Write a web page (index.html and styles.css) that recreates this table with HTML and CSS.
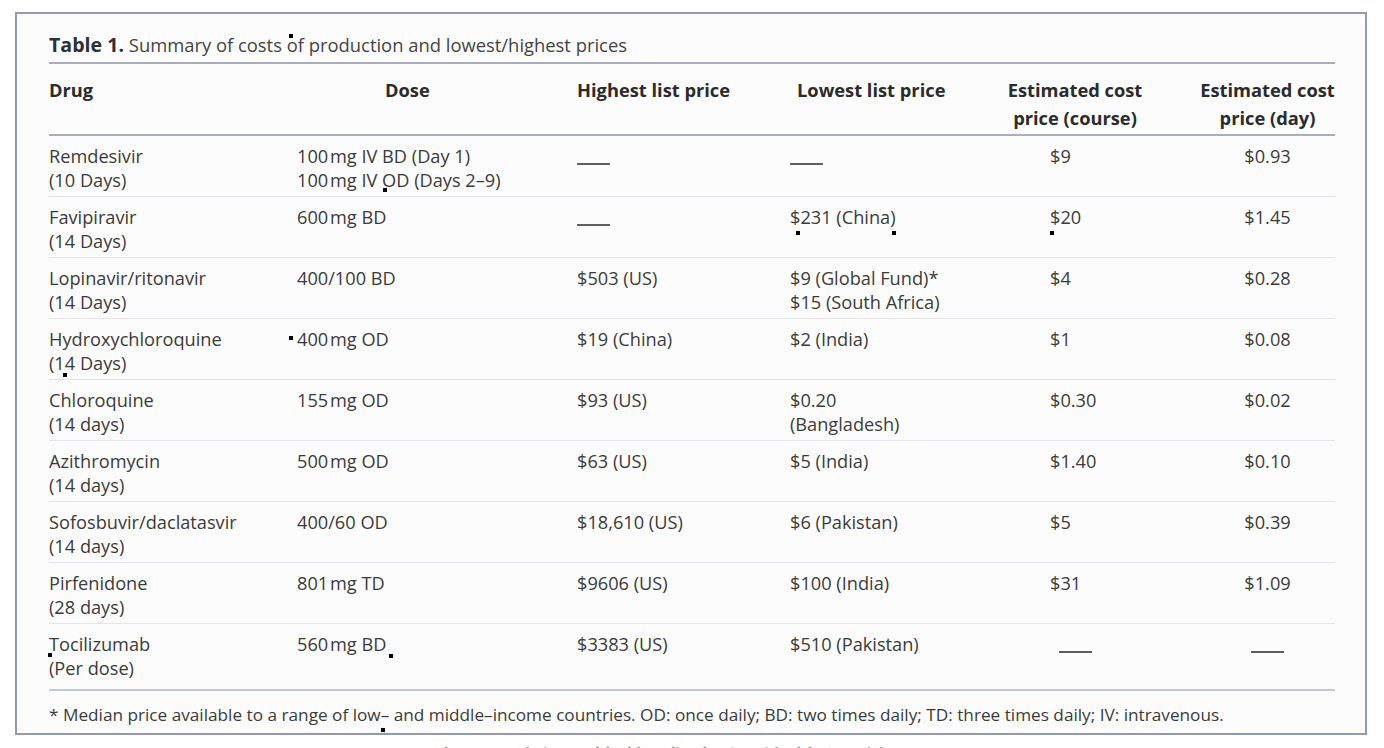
FILE: index.html
```html
<!DOCTYPE html>
<html lang="en">
<head>
<meta charset="utf-8">
<title>Table 1</title>
<link rel="stylesheet" href="styles.css">
</head>
<body>
<div class="page">
  <div class="frame">
    <div class="title"><b>Table 1.</b> Summary of costs of production and lowest/highest prices</div>
    <div class="table">
      <div class="row head">
        <div class="c1">Drug</div>
        <div class="c2">Dose</div>
        <div class="c3">Highest list price</div>
        <div class="c4">Lowest list price</div>
        <div class="c5">Estimated cost<br>price (course)</div>
        <div class="c6">Estimated cost<br>price (day)</div>
      </div>
      <div class="row">
        <div class="c1">Remdesivir<br>(10 Days)</div>
        <div class="c2">100&#8202;mg IV BD (Day 1)<br>100&#8202;mg IV OD (Days 2–9)</div>
        <div class="c3"><span class="dash"></span></div>
        <div class="c4"><span class="dash"></span></div>
        <div class="c5">$9</div>
        <div class="c6">$0.93</div>
      </div>
      <div class="row">
        <div class="c1">Favipiravir<br>(14 Days)</div>
        <div class="c2">600&#8202;mg BD</div>
        <div class="c3"><span class="dash"></span></div>
        <div class="c4">$231 (China)</div>
        <div class="c5">$20</div>
        <div class="c6">$1.45</div>
      </div>
      <div class="row">
        <div class="c1">Lopinavir/ritonavir<br>(14 Days)</div>
        <div class="c2">400/100 BD</div>
        <div class="c3">$503 (US)</div>
        <div class="c4">$9 (Global Fund)*<br>$15 (South Africa)</div>
        <div class="c5">$4</div>
        <div class="c6">$0.28</div>
      </div>
      <div class="row">
        <div class="c1">Hydroxychloroquine<br>(14 Days)</div>
        <div class="c2">400&#8202;mg OD</div>
        <div class="c3">$19 (China)</div>
        <div class="c4">$2 (India)</div>
        <div class="c5">$1</div>
        <div class="c6">$0.08</div>
      </div>
      <div class="row">
        <div class="c1">Chloroquine<br>(14 days)</div>
        <div class="c2">155&#8202;mg OD</div>
        <div class="c3">$93 (US)</div>
        <div class="c4">$0.20<br>(Bangladesh)</div>
        <div class="c5">$0.30</div>
        <div class="c6">$0.02</div>
      </div>
      <div class="row">
        <div class="c1">Azithromycin<br>(14 days)</div>
        <div class="c2">500&#8202;mg OD</div>
        <div class="c3">$63 (US)</div>
        <div class="c4">$5 (India)</div>
        <div class="c5">$1.40</div>
        <div class="c6">$0.10</div>
      </div>
      <div class="row">
        <div class="c1">Sofosbuvir/daclatasvir<br>(14 days)</div>
        <div class="c2">400/60 OD</div>
        <div class="c3">$18,610 (US)</div>
        <div class="c4">$6 (Pakistan)</div>
        <div class="c5">$5</div>
        <div class="c6">$0.39</div>
      </div>
      <div class="row">
        <div class="c1">Pirfenidone<br>(28 days)</div>
        <div class="c2">801&#8202;mg TD</div>
        <div class="c3">$9606 (US)</div>
        <div class="c4">$100 (India)</div>
        <div class="c5">$31</div>
        <div class="c6">$1.09</div>
      </div>
      <div class="row last">
        <div class="c1">Tocilizumab<br>(Per dose)</div>
        <div class="c2">560&#8202;mg BD</div>
        <div class="c3">$3383 (US)</div>
        <div class="c4">$510 (Pakistan)</div>
        <div class="c5 mid"><span class="dash"></span></div>
        <div class="c6"><span class="dash"></span></div>
      </div>
    </div>
    <div class="foot">* Median price available to a range of low– and middle–income countries. OD: once daily; BD: two times daily; TD: three times daily; IV: intravenous.</div>

    <span class="mark m1"></span>
    <span class="mark m2"></span>
    <span class="mark m3"></span>
    <span class="mark m4"></span>
    <span class="mark m5"></span>
    <span class="mark m6"></span>
    <span class="mark m7"></span>
    <span class="mark m8"></span>
    <span class="mark m9"></span>
    <span class="mark m10"></span>
  </div>
  <div class="caption">图表1：新冠药物成本与价格汇总</div>
</div>
</body>
</html>
```

FILE: styles.css
```css
* { box-sizing: border-box; }

html, body {
  margin: 0;
  padding: 0;
  background: #ffffff;
  overflow: hidden;
}

.page {
  width: 1384px;
  height: 748px;
  padding: 12px 0 0 15px;
  font-family: "Open Sans", "Noto Sans", sans-serif;
  color: #3b3b3b;
  overflow: hidden;
}

.frame {
  position: relative;
  width: 1352px;
  height: 723px;
  border: 2px solid #9599ad;
  background: #fcfcfc;
  padding: 19px 30px 0 32px;
}

.title {
  font-size: 18.4px;
  line-height: 24px;
  color: #444;
  padding-bottom: 5px;
  border-bottom: 2px solid #a9adbf;
  white-space: nowrap;
}

.title b {
  color: #2c3038;
  font-weight: 700;
  font-size: 19.6px;
}

.row {
  display: grid;
  grid-template-columns: 248px 280px 213px 210px 200px 135px;
  font-size: 18.2px;
  line-height: 24px;
  padding: 8px 0 4px;
  border-bottom: 1px solid #e4e4ea;
}

.row > div { white-space: nowrap; }

.row.head {
  font-size: 18.3px;
  font-weight: 700;
  color: #2b2b2b;
  line-height: 28px;
  padding: 12px 0 2px;
  border-bottom: 2px solid #a9adbf;
}

.row.last {
  padding-bottom: 9px;
  border-bottom: 2px solid #c3c6d4;
}

.head .c2 { padding-left: 88px; }
.head .c4 { padding-left: 7px; }
.head .c5 { text-align: center; padding-left: 0; padding-right: 50px; }
.head .c6 { text-align: center; }

.c5 { padding-left: 50px; }
.c5.mid { padding-left: 0; padding-right: 50px; text-align: center; }
.c6 { text-align: center; }

.dash {
  display: inline-block;
  width: 33px;
  height: 2px;
  background: #606060;
  vertical-align: -2px;
}

.foot {
  font-size: 17.2px;
  line-height: 22px;
  padding-top: 13px;
  color: #3b3b3b;
  white-space: nowrap;
}

.mark {
  position: absolute;
  width: 4px;
  height: 4px;
  background: #000;
}
/* marker coordinates relative to frame padding box (frame at 15,12 + 2px border) */
.m1 { left: 272px; top: 20px; }
.m2 { left: 366px; top: 174px; }
.m3 { left: 779px; top: 217px; }
.m4 { left: 875px; top: 217px; }
.m5 { left: 1033px; top: 217px; }
.m6 { left: 272px; top: 322px; }
.m7 { left: 46px; top: 359px; }
.m8 { left: 31px; top: 639px; }
.m9 { left: 372px; top: 640px; }
.m10 { left: 364px; top: 714px; }

.caption {
  font-family: "Noto Sans CJK SC", sans-serif;
  font-size: 30px;
  line-height: 30px;
  color: #8a8a8a;
  padding-left: 382px;
  margin-top: 9px;
  letter-spacing: 4px;
  white-space: nowrap;
}
```
